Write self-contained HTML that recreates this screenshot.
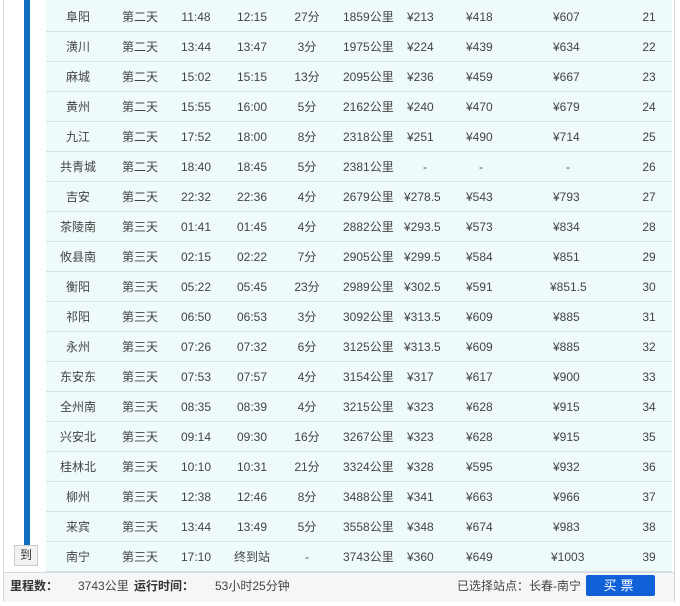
<!DOCTYPE html>
<html><head><meta charset="utf-8"><style>
body{margin:0;width:680px;height:606px;background:#fff;font-family:"Liberation Sans","Noto Sans CJK SC",sans-serif;font-size:12px;color:#444;position:relative;overflow:hidden}
.box{position:absolute;left:3px;top:-2px;width:672px;height:604px;border:1px solid #d4dadf;box-sizing:border-box;background:#fff}
.bar{position:absolute;left:24px;top:0;width:6px;height:546px;background:#0f6fbf}
.tbl{position:absolute;left:46px;top:0;width:626px;height:572px;background:#effafb}
.row{position:absolute;left:46px;width:626px;height:30px;border-bottom:1px solid #d6e2e6;box-sizing:border-box}
.c{position:absolute;top:0;line-height:30px;white-space:nowrap}
.ctr{transform:translateX(-50%)}
.foot{position:absolute;left:4px;top:572px;width:670px;height:29px;background:#f4f6f8;border-top:1px solid #d4dadf;line-height:26px}
.btn{position:absolute;left:586px;top:575px;width:69px;height:21px;background:#1060d8;color:#fff;text-align:center;line-height:21px;font-size:13px;letter-spacing:4px;border-radius:2px}
.dao{position:absolute;left:14px;top:545px;width:22px;height:19px;background:#f2f2f2;border:1px solid #ccc;line-height:18px;text-align:center;color:#333}
</style></head><body>
<div class="box"></div>
<div class="tbl"></div>
<div class="bar"></div>
<div id="rows"></div>
<div class="dao">到</div>
<div class="foot">
<span style="position:absolute;left:6px;font-weight:bold;color:#333">里程数：</span>
<span style="position:absolute;left:74px">3743公里</span>
<span style="position:absolute;left:130px;font-weight:bold;color:#333">运行时间：</span>
<span style="position:absolute;left:211px">53小时25分钟</span>
<span style="position:absolute;left:453px">已选择站点：长春-南宁</span>
</div>
<div class="btn">买票</div>
<script>
var d=[["阜阳","第二天","11:48","12:15","27分","1859公里","¥213","¥418","¥607","21"],
["潢川","第二天","13:44","13:47","3分","1975公里","¥224","¥439","¥634","22"],
["麻城","第二天","15:02","15:15","13分","2095公里","¥236","¥459","¥667","23"],
["黄州","第二天","15:55","16:00","5分","2162公里","¥240","¥470","¥679","24"],
["九江","第二天","17:52","18:00","8分","2318公里","¥251","¥490","¥714","25"],
["共青城","第二天","18:40","18:45","5分","2381公里","-","-","-","26"],
["吉安","第二天","22:32","22:36","4分","2679公里","¥278.5","¥543","¥793","27"],
["茶陵南","第三天","01:41","01:45","4分","2882公里","¥293.5","¥573","¥834","28"],
["攸县南","第三天","02:15","02:22","7分","2905公里","¥299.5","¥584","¥851","29"],
["衡阳","第三天","05:22","05:45","23分","2989公里","¥302.5","¥591","¥851.5","30"],
["祁阳","第三天","06:50","06:53","3分","3092公里","¥313.5","¥609","¥885","31"],
["永州","第三天","07:26","07:32","6分","3125公里","¥313.5","¥609","¥885","32"],
["东安东","第三天","07:53","07:57","4分","3154公里","¥317","¥617","¥900","33"],
["全州南","第三天","08:35","08:39","4分","3215公里","¥323","¥628","¥915","34"],
["兴安北","第三天","09:14","09:30","16分","3267公里","¥323","¥628","¥915","35"],
["桂林北","第三天","10:10","10:31","21分","3324公里","¥328","¥595","¥932","36"],
["柳州","第三天","12:38","12:46","8分","3488公里","¥341","¥663","¥966","37"],
["来宾","第三天","13:44","13:49","5分","3558公里","¥348","¥674","¥983","38"],
["南宁","第三天","17:10","终到站","-","3743公里","¥360","¥649","¥1003","39"]];
var h="";
d.forEach(function(r,i){
var top=2+30*i;
h+='<div class="row" style="top:'+top+'px">';
var cx=[78,140,196,252,307];
for(var k=0;k<5;k++)h+='<span class="c ctr" style="left:'+(cx[k]-46)+'px">'+r[k]+'</span>';
h+='<span class="c" style="left:'+(343-46)+'px">'+r[5]+'</span>';
var pl=[407,466,553],pc=[425,481,568];
for(var k=0;k<3;k++){var v=r[6+k];
if(v=="-")h+='<span class="c ctr" style="left:'+(pc[k]-46)+'px">-</span>';
else{var l=pl[k];if(v.length>=6)l-=3;if(v.length==5&&k==2)l-=2;h+='<span class="c" style="left:'+(l-46)+'px">'+v+'</span>';}}
h+='<span class="c ctr" style="left:'+(649-46)+'px">'+r[9]+'</span></div>';
});
document.getElementById("rows").innerHTML=h;
</script>
</body></html>
